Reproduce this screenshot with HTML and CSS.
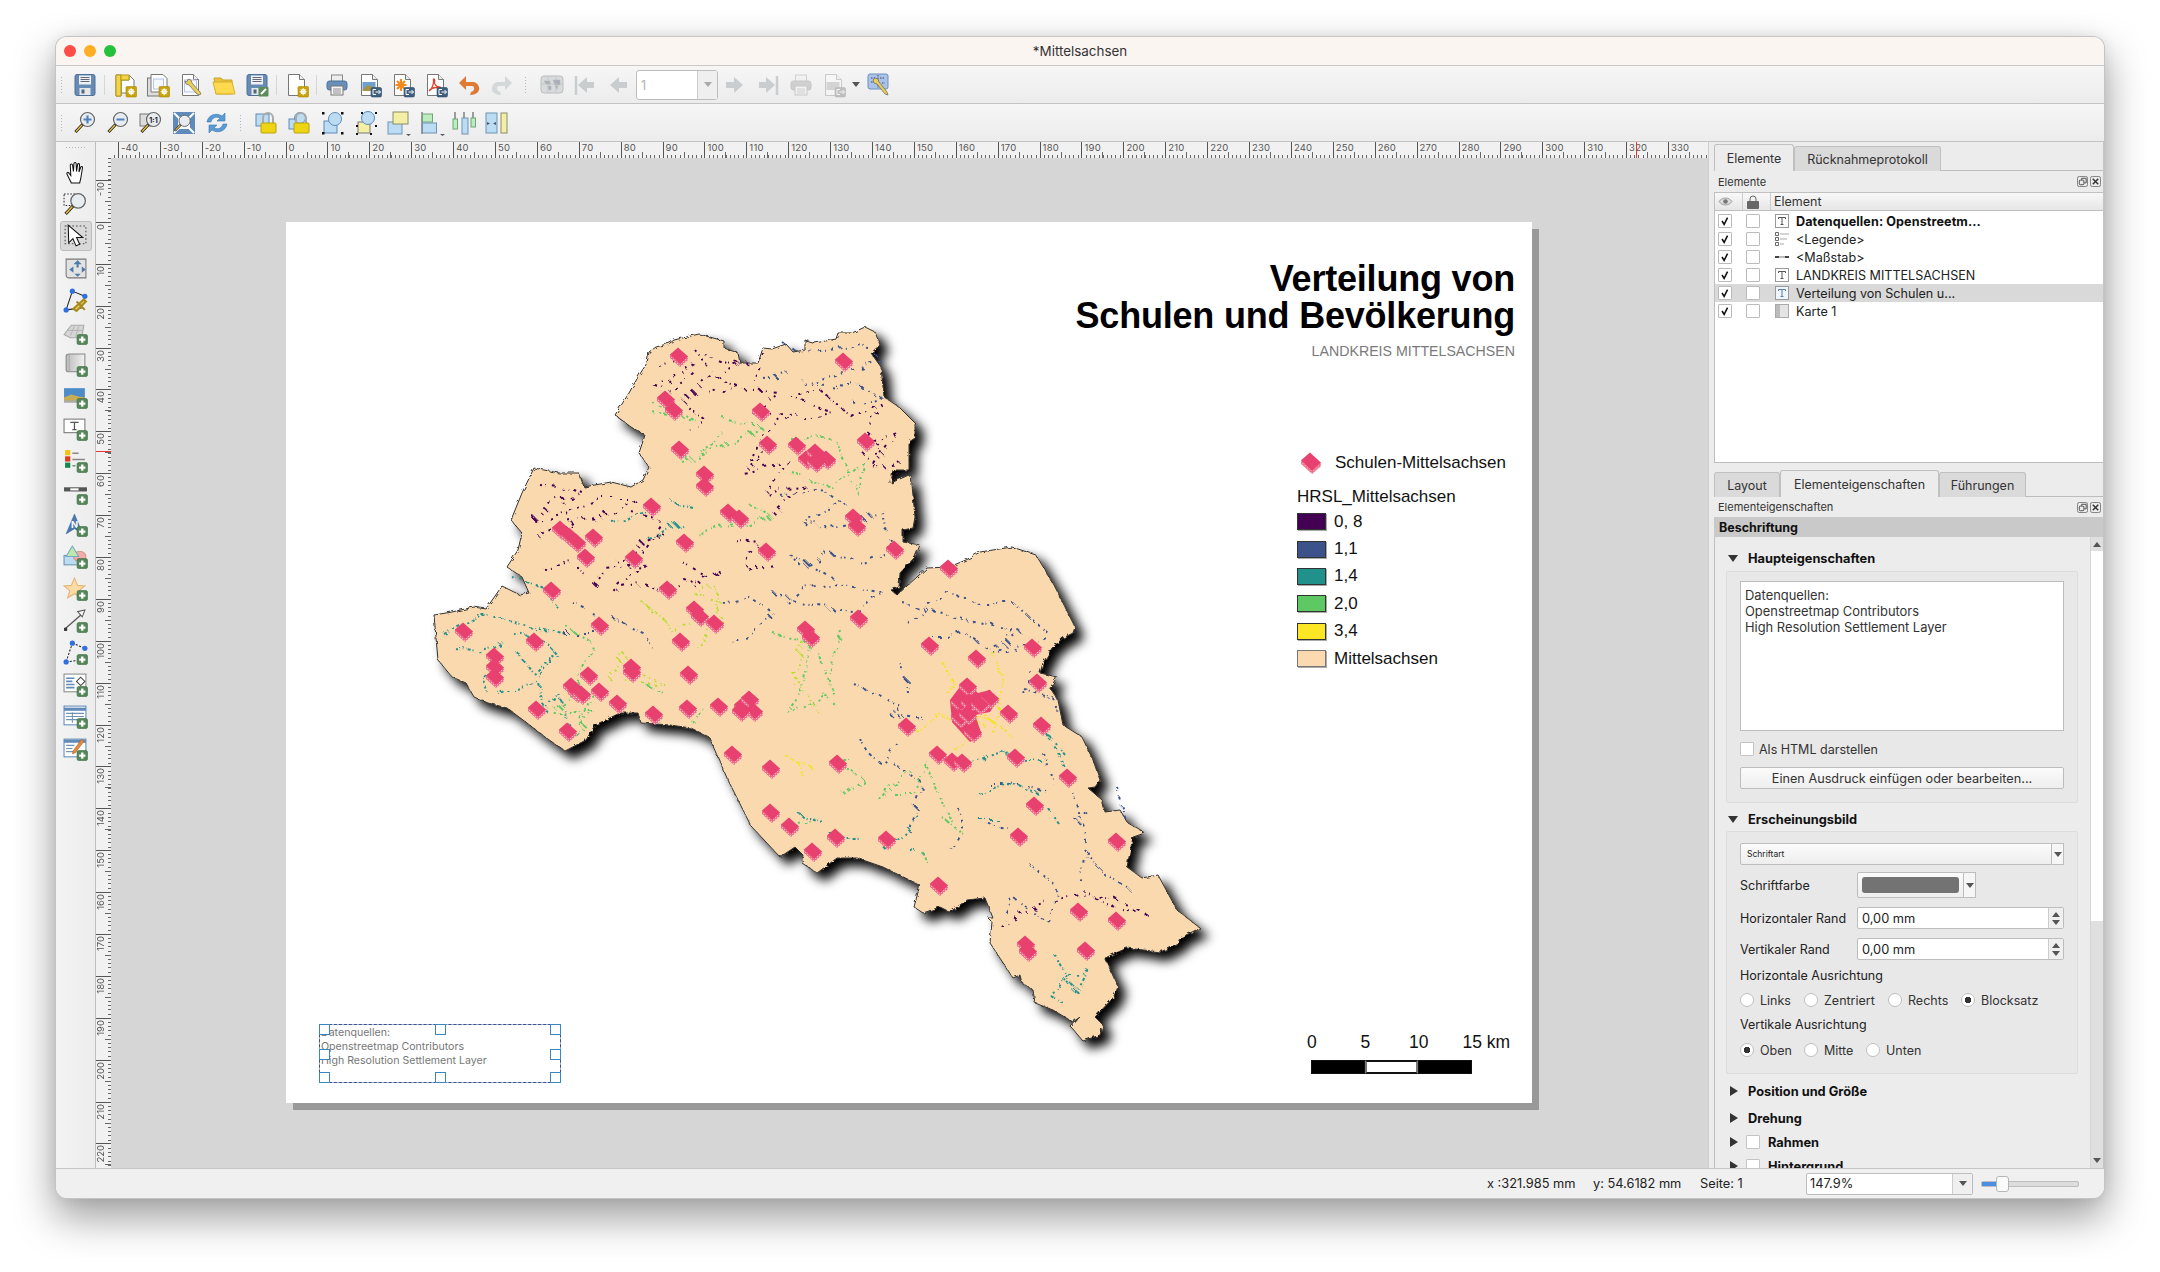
FILE: index.html
```html
<!DOCTYPE html>
<html lang="de">
<head>
<meta charset="utf-8">
<title>*Mittelsachsen</title>
<link rel="stylesheet" href="styles.css">
</head>
<body>
<svg class="defs" aria-hidden="true">
<defs>
<g id="plus"><rect x="13.5" y="14" width="10" height="9.5" rx="1.5" fill="#55875a" stroke="#3f6e45" stroke-width=".6"/><path d="M18.5 15.8v6M15.5 18.8h6" stroke="#fff" stroke-width="2.2"/></g>
<g id="gear"><rect x="13" y="13.5" width="10.5" height="10.5" rx="1" fill="#c8a208" stroke="#a88a06" stroke-width=".6"/><circle cx="18.2" cy="18.7" r="2" fill="none" stroke="#fff" stroke-width="1.2"/><path d="M18.2 15v7.4M14.6 18.7h7.2M15.7 16.2l5 5M20.7 16.2l-5 5" stroke="#fff" stroke-width=".8"/></g>
<g id="exp"><rect x="13" y="14.5" width="10.5" height="9.5" rx="1.5" fill="#3f5f7f" stroke="#2f4a66" stroke-width=".6"/><path d="M18 16.5h-3v5h3M17.5 19h5M20.5 17l2 2-2 2" fill="none" stroke="#fff" stroke-width="1"/></g>
<g id="page"><path d="M3.5 1.5h11l5 5v16h-16z" fill="#fff" stroke="#777"/><path d="M14.5 1.5v5h5" fill="#eee" stroke="#777"/></g>
<g id="floppy"><rect x="2" y="1.5" width="20" height="21" rx="2" fill="#668bb5" stroke="#4d7099"/><rect x="6" y="2.5" width="12" height="9" fill="#eef1f4"/><path d="M7.5 4.5h9M7.5 6.5h9M7.5 8.5h9" stroke="#667"/><rect x="6.5" y="15" width="11" height="7" fill="#e3e7ea"/><rect x="8.5" y="16.5" width="3" height="4" fill="#567"/></g>
<g id="printer"><rect x="6.5" y="2" width="11" height="7" fill="#eee" stroke="#888"/><rect x="2" y="8" width="20" height="9" rx="2.5" fill="#6a8fb8" stroke="#4d7099"/><rect x="6" y="13" width="12" height="9" fill="#f4f4f4" stroke="#777"/><path d="M8 16h8M8 18h8M8 20h8" stroke="#777" stroke-width=".8"/></g>
<g id="lens"><circle cx="14.5" cy="8.5" r="7" fill="#e6ecf0" stroke="#666" stroke-width="1.2"/><path d="M9.5 13.5L2.5 21" stroke="#222" stroke-width="3"/><path d="M9 14L3 20.5" stroke="#e8b93a" stroke-width="1.5"/></g>
<g id="lock"><path d="M8 12V7a5 5 0 0 1 10 0v5" fill="none" stroke="#aaa" stroke-width="2"/><rect x="6" y="12" width="15" height="10" rx="1" fill="#eed514" stroke="#b9a210"/></g>
<g id="arrowr"><path d="M3 9h8V4l9 8-9 8v-5H3z" fill="#c9cdcf"/></g>
<linearGradient id="gradMap"><stop offset="0" stop-color="#bbb"/><stop offset="1" stop-color="#f2f2f2"/></linearGradient>
<pattern id="hatch" width="2" height="2" patternUnits="userSpaceOnUse"><rect width="2" height="2" fill="#ee6d8c"/><path d="M0 0h1v1H0z" fill="#fbb6c2"/></pattern>
<g id="s"><path fill="url(#hatch)" d="M-9-2.500V1L1 10 9 3V-.5Z"/><path fill="#e8416f" d="M-9-2.500L-1-9.500 9-.5 1 7Z"/></g>
<filter id="terrain" x="-5%" y="-5%" width="115%" height="115%"><feTurbulence type="fractalNoise" baseFrequency=".22" numOctaves="2" seed="7" result="n"/><feDisplacementMap in="SourceGraphic" in2="n" scale="4" result="d"/><feGaussianBlur in="d" stdDeviation="5.5" result="b"/><feOffset in="b" dx="8" dy="8" result="o"/><feComponentTransfer in="o" result="sh"><feFuncR type="linear" slope="0"/><feFuncG type="linear" slope="0"/><feFuncB type="linear" slope="0"/></feComponentTransfer><feMerge><feMergeNode in="sh"/><feMergeNode in="d"/></feMerge></filter>
<filter id="wiggle" x="-5%" y="-5%" width="110%" height="110%"><feTurbulence type="fractalNoise" baseFrequency=".06" numOctaves="2" seed="11" result="n"/><feDisplacementMap in="SourceGraphic" in2="n" scale="14"/></filter>
</defs>
</svg>

<div class="window">
<header class="titlebar">
  <span class="light red"></span><span class="light amber"></span><span class="light green"></span>
  <span class="wintitle">*Mittelsachsen</span>
</header>

<div class="toolbar">
  <span class="grip"></span>
  <span class="tb"><svg class="ic" viewBox="0 0 24 24"><use href="#floppy"/></svg></span>
  <span class="sep"></span>
  <span class="tb"><svg class="ic" viewBox="0 0 24 24"><path d="M3 2h5v21H3zM8 7h8V2l5 5v13H8z" fill="#fff" stroke="#777"/><path d="M3 2h5v21H3z" fill="#f3d34a" stroke="#b79a10"/><path d="M8 2h8v5H8z" fill="#f3d34a" stroke="#b79a10"/><use href="#gear"/></svg></span>
  <span class="tb"><svg class="ic" viewBox="0 0 24 24"><rect x="1.5" y="5" width="17" height="18" fill="#ddd" stroke="#777"/><path d="M5 1.5h12l4 4V19H5z" fill="#fff" stroke="#777"/><rect x="7.5" y="6" width="10" height="10" fill="#f4f7ff" stroke="#b5c4ea"/><use href="#gear"/></svg></span>
  <span class="tb"><svg class="ic" viewBox="0 0 24 24"><use href="#page"/><rect x="5.5" y="7" width="12" height="12" fill="#f4f7ff" stroke="#b5c4ea"/><path d="M9 6l3 1 1 3 8 9 1 2-2 1-2-1-8-9-3-1-1-3 2 1z" fill="#e9cd56" stroke="#666" stroke-width=".7"/></svg></span>
  <span class="tb"><svg class="ic" viewBox="0 0 24 24"><path d="M2 5h7l2 2h9v14H4z" fill="#e9c23d" stroke="#c9a52a"/><path d="M4 21L1 9h19l3 12z" fill="#ffd94e" stroke="#d6b02f"/></svg></span>
  <span class="tb"><svg class="ic" viewBox="0 0 24 24"><use href="#floppy"/><rect x="13.5" y="14" width="10" height="9.5" rx="1" fill="#5b8c5a"/><path d="M16 21l5-5" stroke="#fff" stroke-width="2"/></svg></span>
  <span class="sep"></span>
  <span class="tb"><svg class="ic" viewBox="0 0 24 24"><use href="#page"/><use href="#gear"/></svg></span>
  <span class="sep"></span>
  <span class="tb"><svg class="ic" viewBox="0 0 24 24"><use href="#printer"/></svg></span>
  <span class="tb"><svg class="ic" viewBox="0 0 24 24"><use href="#page"/><rect x="4.5" y="9" width="13" height="8" fill="#6d9fd0"/><path d="M4.500 17l5-5 8 3v3h-13z" fill="#a89448"/><use href="#exp"/></svg></span>
  <span class="tb"><svg class="ic" viewBox="0 0 24 24"><use href="#page"/><path d="M10 6v12M4.500 12h11M6 8l8 8M14 8l-8 8" stroke="#f38a1d" stroke-width="2.2"/><use href="#exp"/></svg></span>
  <span class="tb"><svg class="ic" viewBox="0 0 24 24"><use href="#page"/><path d="M5 18c3-2 5-7 4.500-11-.2-2 2-1 1 2-.5 2 2 5 5 5 2 0 1 2-1 1-3-1-6-1-9.500 3" fill="none" stroke="#e2402a" stroke-width="1.3"/><use href="#exp"/></svg></span>
  <span class="tb"><svg class="ic" viewBox="0 0 24 24"><path d="M9 3L2 10l7 7v-4h6c3 0 3 5-1 6l-1 3c7 0 10-4 9-8-1-3-3-5-7-5H9z" fill="#de7a33"/></svg></span>
  <span class="tb"><svg class="ic" viewBox="0 0 24 24"><path d="M15 3l7 7-7 7v-4H9c-3 0-3 5 1 6l1 3c-7 0-10-4-9-8 1-3 3-5 7-5h6z" fill="#d5d8d8"/></svg></span>
  <span class="grip wide"></span>
  <span class="tb"><svg class="ic" viewBox="0 0 24 24"><rect x="1" y="3" width="22" height="17" rx="3" fill="#d8dbdc" stroke="#b9bcbd"/><path d="M4 8h6v3H6zM13 7h7v5h-5zM8 13h3v4H9zM15 13h3l-1 3zM8 4v15M16 4v15M2 11h20" fill="#aab" stroke="#b9bcbd" stroke-width=".6"/></svg></span>
  <span class="tb"><svg class="ic" viewBox="0 0 24 24"><path d="M3 3v19" stroke="#c9cdcf" stroke-width="2.5"/><path d="M21 9h-7V4l-9 8 9 8v-5h7z" fill="#c9cdcf"/></svg></span>
  <span class="tb"><svg class="ic" viewBox="0 0 24 24"><path d="M21 9h-8V4l-9 8 9 8v-5h8z" fill="#c9cdcf"/></svg></span>
  <span class="pagecombo"><span class="pageval">1</span><span class="pagearrow"><i class="tri grey"></i></span></span>
  <span class="tb"><svg class="ic" viewBox="0 0 24 24"><use href="#arrowr"/></svg></span>
  <span class="tb"><svg class="ic" viewBox="0 0 24 24"><path d="M21 3v19" stroke="#c9cdcf" stroke-width="2.5"/><path d="M3 9h7V4l9 8-9 8v-5H3z" fill="#c9cdcf"/></svg></span>
  <span class="tb"><svg class="ic dim" viewBox="0 0 24 24"><use href="#printer"/></svg></span>
  <span class="tb"><svg class="ic dim" viewBox="0 0 24 24"><use href="#page"/><rect x="4.5" y="9" width="13" height="8" fill="#6d9fd0"/><use href="#exp"/></svg></span>
  <span class="dropmark"><i class="tri"></i></span>
  <span class="tb"><svg class="ic" viewBox="0 0 24 24"><rect x="1" y="1" width="20" height="15" rx="2" fill="#a9c4e8" stroke="#6f8fbd"/><path d="M4 5h5M13 5h5M4 9h3M15 10h3M11 2v13" stroke="#446" stroke-width="1" stroke-dasharray="1.500 1"/><path d="M8 5l3 1 1 3 8 10 1 3-3-1-8-10-3-1-1-3z" fill="#e9cd56" stroke="#666" stroke-width=".7"/></svg></span>
</div>

<div class="toolbar second">
  <span class="grip"></span>
  <span class="tb"><svg class="ic" viewBox="0 0 24 24"><use href="#lens"/><path d="M14.500 4.500v8M10.500 8.500h8" stroke="#4f82bd" stroke-width="2.2"/></svg></span>
  <span class="tb"><svg class="ic" viewBox="0 0 24 24"><use href="#lens"/><path d="M10.500 8.500h8" stroke="#4f82bd" stroke-width="2.2"/></svg></span>
  <span class="tb"><svg class="ic" viewBox="0 0 24 24"><rect x="1" y="3" width="13" height="12" fill="#dcdcdc" stroke="#777"/><use href="#lens"/><text class="one" x="14.5" y="11.5">1:1</text></svg></span>
  <span class="tb"><svg class="ic" viewBox="0 0 24 24"><rect x="1" y="1" width="22" height="22" fill="#5f8ab9"/><rect x="6" y="6" width="12" height="12" fill="#f2f4f6"/><path d="M2 2l7 7M22 2l-7 7M2 22l7-7M22 22l-7-7" stroke="#fff" stroke-width="2"/><use href="#lens" transform="translate(1 3) scale(.8)"/></svg></span>
  <span class="tb"><svg class="ic" viewBox="0 0 24 24"><path d="M2 11C3 4 11 1 17 5l3-3v8h-8l3-3C11 5 7 7 6 11z" fill="#5a9bd5" stroke="#3e78b0" stroke-width=".6"/><path d="M22 13c-1 7-9 10-15 6l-3 3v-8h8l-3 3c4 2 8 0 9-4z" fill="#5a9bd5" stroke="#3e78b0" stroke-width=".6"/></svg></span>
  <span class="grip wide"></span>
  <span class="tb"><svg class="ic" viewBox="0 0 24 24"><rect x="1" y="3" width="13" height="12" fill="#bcdcf4" stroke="#5f8ab9"/><use href="#lock"/></svg></span>
  <span class="tb"><svg class="ic" viewBox="0 0 24 24"><rect x="1" y="8" width="11" height="10" fill="#bcdcf4" stroke="#5f8ab9"/><circle cx="12" cy="7" r="5.5" fill="#bcdcf4" stroke="#5f8ab9"/><use href="#lock"/></svg></span>
  <span class="tb"><svg class="ic" viewBox="0 0 24 24"><rect x="3" y="10" width="13" height="12" fill="#bcdcf4" stroke="#5f8ab9"/><circle cx="14" cy="8" r="6.5" fill="#bcdcf4" stroke="#5f8ab9"/><path d="M1 1h2.500v2.500H1zM20 1h2.500v2.500H20zM1 21h2.500v2.500H1zM20 21h2.500v2.500H20z" fill="#111"/></svg></span>
  <span class="tb"><svg class="ic" viewBox="0 0 24 24"><rect x="4" y="11" width="12" height="11" fill="#f3efa4" stroke="#777"/><circle cx="14" cy="7" r="6.5" fill="#bcdcf4" stroke="#5f8ab9"/><path d="M7 1h2v2H7zM21 1h2v2h-2zM2 14h2v2H2zM2 22h2v2H2zM21 14h2v2h-2zM16 22h2v2h-2z" fill="#111"/></svg></span>
  <span class="tb"><svg class="ic" viewBox="0 0 24 24"><rect x="1" y="11" width="14" height="12" fill="#bcdcf4" stroke="#6f93b5"/><rect x="6" y="1" width="15" height="12" fill="#f3efa4" stroke="#8a8a70"/><path d="M19 23h5l-2.500 2z" fill="#555"/></svg></span>
  <span class="tb"><svg class="ic" viewBox="0 0 24 24"><path d="M2 1v22" stroke="#444"/><rect x="2.5" y="3" width="10" height="8" fill="#bcecc0" stroke="#6fa574"/><rect x="2.5" y="12" width="14" height="10" fill="#bcdcf4" stroke="#6f93b5"/><path d="M20 23h5l-2.500 2z" fill="#555"/></svg></span>
  <span class="tb"><svg class="ic" viewBox="0 0 24 24"><path d="M2 1v8M11 1v6M20 1v8" stroke="#444"/><rect x="0" y="8" width="4.5" height="10" fill="#bcecc0" stroke="#6fa574"/><rect x="9" y="7" width="6" height="16" fill="#bcdcf4" stroke="#6f93b5"/><rect x="18" y="7" width="4.5" height="9" fill="#bcecc0" stroke="#6fa574"/></svg></span>
  <span class="tb"><svg class="ic" viewBox="0 0 24 24"><rect x="0" y="2" width="11" height="20" fill="#bcdcf4" stroke="#6f93b5"/><rect x="15" y="2" width="6" height="20" fill="#f3efa4" stroke="#8a8a70"/><path d="M1 11l3 1.500-3 1.500zM10 11l-3 1.500 3 1.500z" fill="#456"/></svg></span>
</div>

<div class="workspace">
  <nav class="sidetools">
    <span class="grip flat"></span>
    <span class="st"><svg class="ic" viewBox="0 0 24 24"><path d="M8 22L4 14c-1-2 1-3 2-1l1.500 2L7 5c0-1.500 2-1.500 2.200 0L10 11l.5-7.500c.2-1.500 2-1.500 2.100 0L13 11l1-6.500c.3-1.500 2-1.300 1.900.3l-.6 6.700L17 7c.5-1.200 2-.8 1.700.7L17 18l-1 4z" fill="#fff" stroke="#111"/></svg></span>
    <span class="st"><svg class="ic" viewBox="0 0 24 24"><rect x="1" y="2" width="11" height="11" fill="none" stroke="#333" stroke-dasharray="1.500 1.500"/><use href="#lens"/></svg></span>
    <span class="st on"><svg class="ic" viewBox="0 0 24 24"><rect x="2" y="2" width="20" height="17" fill="none" stroke="#444" stroke-dasharray="1.500 2"/><path d="M5 1l.5 17 4-4 3 7 3.500-1.500-3-6.500h6z" fill="#fff" stroke="#111"/></svg></span>
    <span class="st"><svg class="ic" viewBox="0 0 24 24"><path d="M3 3h19v18H6c-3 0-3-2-3-3z" fill="#e2e2e2" stroke="#777"/><path d="M14 4l4 4h-3v3h-2V8h-3zM14 20l-3-3h6zM6 13l4-3v6zM22 13l-4-3v6z" fill="#4d7ba8"/></svg></span>
    <span class="st"><svg class="ic" viewBox="0 0 24 24"><path d="M9 3l12 5M3 21L9 3M3 21l16-2" stroke="#222" fill="none"/><circle cx="9" cy="3" r="2.5" fill="#2f6fe0"/><circle cx="21" cy="8" r="2.5" fill="#2f6fe0"/><circle cx="3" cy="21" r="2.5" fill="#2f6fe0"/><path d="M10 20l10-9 2 2-9 9zM13 13l8 8" stroke="#a88a20" stroke-width="2" fill="#e9cd56"/></svg></span>
    <span class="st"><svg class="ic" viewBox="0 0 24 24"><path d="M1 14L8 5h12l-2 12H7z" fill="#d6d6d6" stroke="#aaa"/><path d="M4 10h15M7 15l4-9M12 16l3-10" stroke="#aaa" stroke-width=".7"/><use href="#plus"/></svg></span>
    <span class="st"><svg class="ic" viewBox="0 0 24 24"><path d="M6 2h15v17H6c-3 0-3-1-3-2V4c0-1 1-2 3-2z" fill="url(#gradMap)" stroke="#888"/><path d="M6 2v17" stroke="#aaa"/><use href="#plus"/></svg></span>
    <span class="st"><svg class="ic" viewBox="0 0 24 24"><rect x="1" y="4" width="20" height="12" fill="#4d8cc9"/><path d="M1 16v-3l7-3 7 2 6 1v3z" fill="#c9ad55"/><path d="M1 16h20v2H1z" fill="#aaa"/><use href="#plus"/></svg></span>
    <span class="st"><svg class="ic" viewBox="0 0 24 24"><rect x="1" y="3" width="20" height="13" fill="#fff" stroke="#777"/><path d="M7 6h8M11 6v7M9 13h4" stroke="#555" stroke-width="1.2" fill="none"/><use href="#plus"/></svg></span>
    <span class="st"><svg class="ic" viewBox="0 0 24 24"><rect x="2" y="2" width="5" height="5" fill="#f3c20e"/><rect x="2" y="8" width="5" height="5" fill="#e03a1c"/><rect x="2" y="14" width="5" height="5" fill="#0f8a4a"/><path d="M9 5h6M9 11h12M9 17h3" stroke="#888" stroke-width="1.6"/><use href="#plus"/></svg></span>
    <span class="st"><svg class="ic" viewBox="0 0 24 24"><rect x="1" y="7" width="22" height="4" fill="#555"/><rect x="7" y="8" width="8" height="2" fill="#fff"/><use href="#plus"/></svg></span>
    <span class="st"><svg class="ic" viewBox="0 0 24 24"><path d="M11 2L3 21l8-5 8 5z" fill="#4c79ad" stroke="#37608f" stroke-width=".5"/><text class="north" x="11" y="15">N</text><use href="#plus"/></svg></span>
    <span class="st"><svg class="ic" viewBox="0 0 24 24"><rect x="1" y="11" width="16" height="9" fill="#bcdcf4" stroke="#6f93b5"/><ellipse cx="16" cy="12" rx="6" ry="5" fill="#f2aaaa" stroke="#c98"/><path d="M9 2l6 10H3z" fill="#bfe8b0" stroke="#7ab"/><use href="#plus"/></svg></span>
    <span class="st"><svg class="ic" viewBox="0 0 24 24"><path d="M11 2l3 7 7 .5-5.500 4.500 2 7L11 17l-6.500 4 2-7L1 9.500 8 9z" fill="#fddba6" stroke="#e3b36f"/><use href="#plus"/></svg></span>
    <span class="st"><svg class="ic" viewBox="0 0 24 24"><path d="M2 20L18 6" stroke="#555" stroke-width="1.2"/><path d="M21 2l-7 1.500 4.500 5z" fill="#fff" stroke="#555"/><rect x="1" y="19" width="3" height="3" fill="#333"/><use href="#plus"/></svg></span>
    <span class="st"><svg class="ic" viewBox="0 0 24 24"><path d="M9 3l12 5M3 21L9 3M3 21l16-2" stroke="#222" fill="none" stroke-dasharray="2 1.500"/><circle cx="9" cy="3" r="2.5" fill="#2f6fe0"/><circle cx="21" cy="8" r="2.5" fill="#2f6fe0"/><circle cx="3" cy="21" r="2.5" fill="#2f6fe0"/><use href="#plus"/></svg></span>
    <span class="st"><svg class="ic" viewBox="0 0 24 24"><rect x="1" y="2" width="21" height="17" fill="#fff" stroke="#888"/><path d="M3 6h8M3 9h6M3 12h8M3 15h8" stroke="#5f8ab9" stroke-width="1.5"/><path d="M13 9l4-4 4 4-4 4z" fill="none" stroke="#444"/><use href="#plus"/></svg></span>
    <span class="st"><svg class="ic" viewBox="0 0 24 24"><rect x="1" y="2" width="21" height="18" fill="#fff" stroke="#5f8ab9"/><path d="M1 5h21" stroke="#5f8ab9" stroke-width="3"/><path d="M3 9h17M3 12h17M3 15h17M9 8v10" stroke="#6f93b5"/><use href="#plus"/></svg></span>
    <span class="st"><svg class="ic" viewBox="0 0 24 24"><rect x="1" y="3" width="21" height="17" fill="#fff" stroke="#5f8ab9"/><path d="M1 5h21" stroke="#5f8ab9" stroke-width="3"/><path d="M3 9h8M3 12h6M3 15h7" stroke="#6f93b5"/><path d="M10 14l8-11 2 2-8 11-3 1z" fill="#e9893a" stroke="#a5602a" stroke-width=".6"/><use href="#plus"/></svg></span>
  </nav>

  <div class="center">
    <div class="hruler">
      <span class="rcorner"></span>
      <span class="hlead"></span>
      <span class="ht">-40</span><span class="ht">-30</span><span class="ht">-20</span><span class="ht">-10</span><span class="ht">0</span><span class="ht">10</span><span class="ht">20</span><span class="ht">30</span><span class="ht">40</span><span class="ht">50</span><span class="ht">60</span><span class="ht">70</span><span class="ht">80</span><span class="ht">90</span><span class="ht">100</span><span class="ht">110</span><span class="ht">120</span><span class="ht">130</span><span class="ht">140</span><span class="ht">150</span><span class="ht">160</span><span class="ht">170</span><span class="ht">180</span><span class="ht">190</span><span class="ht">200</span><span class="ht">210</span><span class="ht">220</span><span class="ht">230</span><span class="ht">240</span><span class="ht">250</span><span class="ht">260</span><span class="ht">270</span><span class="ht">280</span><span class="ht">290</span><span class="ht">300</span><span class="ht">310</span><span class="ht">320</span><span class="ht">330</span>
      <i class="cursor-x"></i>
    </div>
    <div class="centerrow">
      <div class="vruler">
        <span class="vlead"></span>
        <span class="vt"><b>-10</b></span><span class="vt"><b>0</b></span><span class="vt"><b>10</b></span><span class="vt"><b>20</b></span><span class="vt"><b>30</b></span><span class="vt"><b>40</b></span><span class="vt"><b>50</b></span><span class="vt"><b>60</b></span><span class="vt"><b>70</b></span><span class="vt"><b>80</b></span><span class="vt"><b>90</b></span><span class="vt"><b>100</b></span><span class="vt"><b>110</b></span><span class="vt"><b>120</b></span><span class="vt"><b>130</b></span><span class="vt"><b>140</b></span><span class="vt"><b>150</b></span><span class="vt"><b>160</b></span><span class="vt"><b>170</b></span><span class="vt"><b>180</b></span><span class="vt"><b>190</b></span><span class="vt"><b>200</b></span><span class="vt"><b>210</b></span><span class="vt"><b>220</b></span>
        <i class="cursor-y"></i>
      </div>
      <main class="canvas">
        <section class="sheet">
          <svg class="map" viewBox="286 222 1246 881" aria-label="Karte Mittelsachsen">
            <polygon class="land" filter="url(#terrain)" points="649,352 656,347 670,343 674,340 699,334 724,341 724,348 738,353 740,363 758,363 763,348 772,349 786,344 793,352 805,350 805,340 815,343 836,339 838,333 852,333 865,327 875,332 880,345 871,353 881,367 884,397 899,407 915,423 915,438 909,442 909,470 893,470 891,483 911,474 915,517 913,528 903,530 903,542 920,545 915,557 900,573 899,587 891,590 897,595 927,568 949,567 966,560 980,552 1012,547 1036,555 1054,585 1075,627 1073,633 1063,638 1052,648 1043,663 1040,673 1057,677 1050,688 1058,700 1063,725 1082,737 1093,760 1100,780 1095,787 1088,788 1102,800 1105,812 1120,810 1128,823 1145,833 1133,837 1127,867 1142,878 1158,875 1177,910 1200,928 1180,938 1177,945 1160,952 1127,948 1105,958 1118,987 1113,998 1095,1017 1103,1025 1100,1035 1083,1041 1071,1027 1080,1017 1073,1022 1053,1010 1035,1003 1033,990 1022,983 1020,975 1013,978 990,943 992,922 988,918 993,918 985,898 967,900 950,912 940,907 923,913 914,907 920,885 895,873 883,867 857,858 837,858 817,873 802,863 803,855 795,847 780,857 751,826 727,778 709,737 691,728 670,725 641,723 638,713 620,713 595,725 586,740 565,751 545,737 527,723 507,708 488,703 474,697 466,683 452,677 438,660 434,615 452,612 474,607 486,609 502,586 520,595 529,593 522,577 507,567 518,550 522,533 511,520 522,493 534,468 559,473 579,473 584,487 611,482 631,487 643,480 649,467 639,453 645,435 631,427 615,415 629,393 638,377 647,363"/>
            <g filter="url(#wiggle)" transform="translate(-7 -7)">
            <g class="r8">
              <path d="M665 372L682 365 700 372 674 386 662 392 680 398 700 378M710 360L740 372 755 368 725 385 748 395 715 400"/>
              <path d="M745 395L785 400 760 425 800 418 770 440 755 470 780 455 750 480 795 470 770 500 810 495 780 520"/>
              <path d="M810 425L840 420 800 405 825 395 860 425 890 410 870 450 905 440 880 475 910 470 895 495"/>
              <path d="M545 490L575 495 590 500 555 510 540 530 570 520 610 505 640 505 610 525 580 530 545 545"/>
              <path d="M550 575L580 570 600 590 610 575 650 572 620 598 650 590 670 600 690 585 705 590"/>
              <path d="M690 570L715 585 725 575 700 595M670 540L650 550 635 580"/>
              <path d="M870 460L880 470 890 455 875 445M740 545L765 550 750 575 780 570"/>
              <path d="M1010 935L1030 920 1070 905 1100 900 1135 912 1155 922 1120 915 1085 895"/>
              <path d="M700 355L720 380 690 410 715 430 700 440M770 360L760 390M640 520L670 530 650 560 620 570M570 505L585 560"/>
            </g>
            <g class="r11">
              <path d="M790 350L810 362 840 355 870 352 890 368 850 380 810 390 870 395 888 405 860 410M770 385L800 380"/>
              <path d="M790 505L825 495 850 510 810 530 845 535 890 520 900 555 870 570 830 560 810 575 795 560 840 585"/>
              <path d="M910 610L965 625 1000 632 1030 640 1000 660 1040 650 1055 640 1020 610 985 610 955 600 915 630"/>
              <path d="M795 610L810 595 840 590 890 600 865 620 810 610 780 600"/>
              <path d="M620 625L650 640 660 655M580 610L600 620M570 640L610 640M730 610L755 603 780 620 755 640 740 650"/>
              <path d="M860 690L910 715 895 720 930 725M866 745L875 760 890 772 905 750M915 700L913 680 910 670"/>
              <path d="M935 645L955 645 970 640 995 655 1010 650M1015 650L1020 630M1030 700L1040 680"/>
              <path d="M1080 800L1095 850 1090 890M1030 695L1060 705 1065 720M1125 795L1135 830"/>
              <path d="M965 815L970 835 960 860M995 830L1015 835M1090 855L1110 880 1135 895M1085 830L1095 815"/>
              <path d="M1035 870L1060 890 1065 900 1055 930 1020 905 1010 925"/>
              <path d="M995 790L1010 790 1040 795 1055 800M1050 760L1060 790M900 770L930 790 915 840"/>
            </g>
            <g class="r14">
              <path d="M450 640L480 625 510 625 530 632 570 640M520 585L550 595 565 615M520 640L555 650 565 665"/>
              <path d="M462 655L485 660 510 650M525 660L540 680 560 660 540 690 505 700M490 680L495 700"/>
              <path d="M545 690L555 720 565 700 580 745M655 545L690 530M700 515L680 510M620 530L660 520"/>
              <path d="M1010 760L1025 768 1050 770M1070 760L1055 740 1072 775M975 770L1000 762 1020 760"/>
              <path d="M985 800L1010 790 1030 795 1045 800M1055 815L1065 830M985 825L1010 825M890 855L915 835 925 820"/>
              <path d="M832 835L845 845 865 845M805 820L830 830M1060 960L1070 975 1085 1000 1070 985"/>
              <path d="M1055 1000L1070 1010M920 860L935 862M1082 1000L1095 975 1055 1000"/>
            </g>
            <g class="r20">
              <path d="M660 410L690 420 700 425 660 420M730 425L770 435 710 460 730 440M755 510L780 525 700 540"/>
              <path d="M800 480L825 490 840 495 870 470 865 500 840 445 795 445M690 470L720 460"/>
              <path d="M575 635L600 650 580 700 560 720 600 720 585 745 600 700M710 715L700 730M650 690L670 700"/>
              <path d="M780 640L815 650 810 700 795 720 840 700 825 660M850 640L835 690M830 700L845 715"/>
              <path d="M850 800L870 785 840 770 860 765M935 775L945 800 960 830M890 810L905 785 920 775"/>
              <path d="M895 800L920 800 935 770M950 825L975 845M805 830L820 825M930 860L935 870"/>
            </g>
            <g class="r28">
              <path d="M660 620L650 610 670 625 680 640 700 625 730 635 720 590 700 600 730 610 710 650 700 655"/>
              <path d="M615 685L630 660 645 680 670 690 630 690M810 650L800 690M800 680L825 720"/>
            </g>
            <g class="r34">
              <path d="M950 670L960 690 955 700M925 740L945 720 970 735M1000 660L1010 690 1005 720 1000 740"/>
              <path d="M1000 730L1010 735 1020 745M965 760L975 745 985 730 970 720M805 770L810 785M795 765L820 775"/>
              <path d="M985 725L1000 730 990 720 975 725 995 735"/>
            </g>
            </g>
            <polygon class="tint" points="950,700 965,680 978,693 990,690 998,700 990,712 975,715 982,735 970,742 952,722"/>
            <g class="schools">
              <use href="#s" x="679" y="357"/><use href="#s" x="844" y="362"/><use href="#s" x="666" y="400"/><use href="#s" x="674" y="411"/><use href="#s" x="761" y="412"/><use href="#s" x="680" y="450"/><use href="#s" x="768" y="445"/><use href="#s" x="797" y="446"/><use href="#s" x="807" y="460"/><use href="#s" x="816" y="453"/><use href="#s" x="827" y="460"/><use href="#s" x="816" y="463"/><use href="#s" x="866" y="442"/><use href="#s" x="705" y="475"/><use href="#s" x="705" y="487"/><use href="#s" x="652" y="507"/><use href="#s" x="729" y="513"/><use href="#s" x="740" y="519"/><use href="#s" x="854" y="518"/><use href="#s" x="857" y="527"/><use href="#s" x="895" y="550"/><use href="#s" x="685" y="543"/><use href="#s" x="767" y="552"/><use href="#s" x="561" y="530"/><use href="#s" x="570" y="537"/><use href="#s" x="577" y="543"/><use href="#s" x="594" y="538"/><use href="#s" x="586" y="558"/><use href="#s" x="634" y="559"/><use href="#s" x="949" y="569"/><use href="#s" x="552" y="591"/><use href="#s" x="668" y="590"/><use href="#s" x="695" y="610"/><use href="#s" x="700" y="617"/><use href="#s" x="715" y="624"/><use href="#s" x="859" y="619"/><use href="#s" x="464" y="632"/><use href="#s" x="535" y="642"/><use href="#s" x="600" y="626"/><use href="#s" x="806" y="630"/><use href="#s" x="811" y="638"/><use href="#s" x="681" y="642"/><use href="#s" x="930" y="646"/><use href="#s" x="495" y="657"/><use href="#s" x="495" y="668"/><use href="#s" x="495" y="678"/><use href="#s" x="632" y="668"/><use href="#s" x="632" y="673"/><use href="#s" x="589" y="676"/><use href="#s" x="689" y="675"/><use href="#s" x="572" y="687"/><use href="#s" x="577" y="693"/><use href="#s" x="582" y="695"/><use href="#s" x="600" y="692"/><use href="#s" x="618" y="704"/><use href="#s" x="537" y="710"/><use href="#s" x="654" y="715"/><use href="#s" x="688" y="709"/><use href="#s" x="719" y="707"/><use href="#s" x="743" y="707"/><use href="#s" x="750" y="700"/><use href="#s" x="754" y="712"/><use href="#s" x="741" y="712"/><use href="#s" x="907" y="727"/><use href="#s" x="568" y="732"/>
              <use href="#s" x="977" y="659"/><use href="#s" x="1033" y="648"/><use href="#s" x="1038" y="683"/><use href="#s" x="968" y="687"/><use href="#s" x="990" y="699"/><use href="#s" x="960" y="703"/><use href="#s" x="970" y="703"/><use href="#s" x="980" y="705"/><use href="#s" x="960" y="718"/><use href="#s" x="968" y="715"/><use href="#s" x="973" y="733"/><use href="#s" x="1009" y="714"/><use href="#s" x="1042" y="726"/><use href="#s" x="938" y="755"/><use href="#s" x="953" y="762"/><use href="#s" x="963" y="763"/><use href="#s" x="1016" y="758"/><use href="#s" x="1068" y="778"/><use href="#s" x="838" y="764"/><use href="#s" x="1035" y="806"/><use href="#s" x="790" y="827"/><use href="#s" x="813" y="852"/><use href="#s" x="836" y="838"/><use href="#s" x="887" y="840"/><use href="#s" x="1019" y="837"/><use href="#s" x="1117" y="842"/><use href="#s" x="939" y="886"/><use href="#s" x="1079" y="912"/><use href="#s" x="1117" y="921"/><use href="#s" x="1026" y="945"/><use href="#s" x="1028" y="952"/><use href="#s" x="1086" y="951"/><use href="#s" x="771" y="769"/><use href="#s" x="733" y="755"/><use href="#s" x="771" y="813"/>
            </g>
          </svg>

          <h1 class="maptitle">Verteilung von<br>Schulen und Bevölkerung</h1>
          <p class="mapsub">LANDKREIS MITTELSACHSEN</p>

          <div class="legend">
            <div class="lg-school"><svg class="lg-sym" viewBox="-10 -10 20 20"><use href="#s"/></svg><span>Schulen-Mittelsachsen</span></div>
            <div class="lg-head">HRSL_Mittelsachsen</div>
            <div class="lg-row"><i class="patch p1"></i>0, 8</div>
            <div class="lg-row"><i class="patch p2"></i>1,1</div>
            <div class="lg-row"><i class="patch p3"></i>1,4</div>
            <div class="lg-row"><i class="patch p4"></i>2,0</div>
            <div class="lg-row"><i class="patch p5"></i>3,4</div>
            <div class="lg-row"><i class="patch p6"></i>Mittelsachsen</div>
          </div>

          <div class="scalebar">
            <div class="sb-labels"><span>0</span><span>5</span><span>10</span><span class="sb-last">15 km</span></div>
            <div class="sb-bar"><i></i><i class="w"></i><i></i></div>
          </div>

          <div class="sources">
            <p>Datenquellen:<br>Openstreetmap Contributors<br>High Resolution Settlement Layer</p>
            <i class="h tl"></i><i class="h tm"></i><i class="h tr"></i><i class="h ml"></i><i class="h mr"></i><i class="h bl"></i><i class="h bm"></i><i class="h br"></i>
          </div>
        </section>
      </main>
    </div>
  </div>
  <div class="splitter"></div>

  <aside class="dock">
    <div class="tabs"><span class="tab on">Elemente</span><span class="tab t2">Rücknahmeprotokoll</span></div>
    <div class="docktitle"><span>Elemente</span><span class="dockbtns"><svg class="dbtn" viewBox="0 0 12 12"><rect x=".5" y=".5" width="11" height="11" rx="2" fill="none" stroke="#777"/><rect x="2.5" y="4.5" width="5" height="5" rx="1" fill="none" stroke="#444"/><path d="M5 4V2.500h5v5H8" fill="none" stroke="#444"/></svg><svg class="dbtn" viewBox="0 0 12 12"><rect x=".5" y=".5" width="11" height="11" rx="2" fill="none" stroke="#777"/><path d="M3 3l6 6M9 3l-6 6" stroke="#333" stroke-width="1.6"/></svg></span></div>
    <div class="treehead">
      <span class="th-a"><svg class="eye" viewBox="0 0 16 12"><path d="M1 6c3-5 11-5 14 0-3 5-11 5-14 0z" fill="#ddd" stroke="#999"/><circle cx="8" cy="6" r="2.5" fill="#777"/></svg></span>
      <span class="th-b"><svg class="padlock" viewBox="0 0 12 14"><path d="M3 6V4a3 3 0 0 1 6 0v2" fill="none" stroke="#666"/><rect x="0" y="6" width="12" height="8" rx="1" fill="#666"/></svg></span>
      <span class="th-c">Element</span>
    </div>
    <div class="tree">
      <div class="row"><span class="cb"><svg viewBox="0 0 14 14"><path d="M3.500 7l2.500 4 4-8" fill="none" stroke="#111" stroke-width="1.8"/></svg></span><span class="cb lockbox"></span><svg class="ri" viewBox="0 0 14 14"><rect x=".5" y=".5" width="13" height="13" fill="#fff" stroke="#999"/><path d="M3.500 3.500h7v1.500M7 3.500v7M5.500 10.500h3M3.500 3.500V5" fill="none" stroke="#555"/></svg><b>Datenquellen: Openstreetm...</b></div>
      <div class="row"><span class="cb"><svg viewBox="0 0 14 14"><path d="M3.500 7l2.500 4 4-8" fill="none" stroke="#111" stroke-width="1.8"/></svg></span><span class="cb lockbox"></span><svg class="ri" viewBox="0 0 14 14"><path d="M.5.500h3v3h-3zM.5 5.500h3v3h-3zM.5 10.500h3v3h-3z" fill="#fff" stroke="#666"/><path d="M5 2h9M5 7h7M5 12h4" stroke="#aaa"/></svg><span>&lt;Legende&gt;</span></div>
      <div class="row"><span class="cb"><svg viewBox="0 0 14 14"><path d="M3.500 7l2.500 4 4-8" fill="none" stroke="#111" stroke-width="1.8"/></svg></span><span class="cb lockbox"></span><svg class="ri" viewBox="0 0 14 14"><path d="M0 6h4v2H0zM10 6h4v2h-4z" fill="#444"/><path d="M4 6h6v2H4z" fill="#bbb"/></svg><span>&lt;Maßstab&gt;</span></div>
      <div class="row"><span class="cb"><svg viewBox="0 0 14 14"><path d="M3.500 7l2.500 4 4-8" fill="none" stroke="#111" stroke-width="1.8"/></svg></span><span class="cb lockbox"></span><svg class="ri" viewBox="0 0 14 14"><rect x=".5" y=".5" width="13" height="13" fill="#fff" stroke="#999"/><path d="M3.500 3.500h7v1.500M7 3.500v7M5.500 10.500h3M3.500 3.500V5" fill="none" stroke="#555"/></svg><span>LANDKREIS MITTELSACHSEN</span></div>
      <div class="row sel"><span class="cb"><svg viewBox="0 0 14 14"><path d="M3.500 7l2.500 4 4-8" fill="none" stroke="#111" stroke-width="1.8"/></svg></span><span class="cb lockbox"></span><svg class="ri" viewBox="0 0 14 14"><rect x=".5" y=".5" width="13" height="13" fill="#eef5fc" stroke="#999"/><path d="M3.500 3.500h7v1.500M7 3.500v7M5.500 10.500h3M3.500 3.500V5" fill="none" stroke="#5a7fa5"/></svg><span>Verteilung von Schulen u...</span></div>
      <div class="row"><span class="cb"><svg viewBox="0 0 14 14"><path d="M3.500 7l2.500 4 4-8" fill="none" stroke="#111" stroke-width="1.8"/></svg></span><span class="cb lockbox"></span><svg class="ri" viewBox="0 0 14 14"><rect x=".5" y=".5" width="13" height="13" fill="#e4e4e4" stroke="#aaa"/><rect x="1" y="1" width="4" height="12" fill="#bbb"/></svg><span>Karte 1</span></div>
    </div>
    <div class="dockgap"></div>
    <div class="tabs lower"><span class="tab t3">Layout</span><span class="tab on t4">Elementeigenschaften</span><span class="tab t5">Führungen</span></div>
    <div class="docktitle second"><span>Elementeigenschaften</span><span class="dockbtns"><svg class="dbtn" viewBox="0 0 12 12"><rect x=".5" y=".5" width="11" height="11" rx="2" fill="none" stroke="#777"/><rect x="2.5" y="4.5" width="5" height="5" rx="1" fill="none" stroke="#444"/><path d="M5 4V2.500h5v5H8" fill="none" stroke="#444"/></svg><svg class="dbtn" viewBox="0 0 12 12"><rect x=".5" y=".5" width="11" height="11" rx="2" fill="none" stroke="#777"/><path d="M3 3l6 6M9 3l-6 6" stroke="#333" stroke-width="1.6"/></svg></span></div>
    <div class="ptitle">Beschriftung</div>
    <div class="scrollwrap">
      <div class="props">
        <div class="sec first"><i class="tri down big"></i><b>Haupteigenschaften</b></div>
        <div class="group g1">
          <div class="textarea">Datenquellen:<br>Openstreetmap Contributors<br>High Resolution Settlement Layer</div>
          <label class="check"><i class="box"></i>Als HTML darstellen</label>
          <div class="button">Einen Ausdruck einfügen oder bearbeiten...</div>
        </div>
        <div class="sec second"><i class="tri down big"></i><b>Erscheinungsbild</b></div>
        <div class="group g2">
          <div class="fontrow"><span class="fontbtn">Schriftart</span><span class="fontarrow"><i class="tri"></i></span></div>
          <div class="frow colorrow"><span class="flabel">Schriftfarbe</span><span class="colorbtn"><i></i></span><span class="colorarrow"><i class="tri"></i></span></div>
          <div class="frow inrow"><span class="flabel">Horizontaler Rand</span><span class="spin"><span class="spinval">0,00 mm</span><span class="spinbtn"><i class="tri up"></i><i class="tri"></i></span></span></div>
          <div class="frow inrow"><span class="flabel">Vertikaler Rand</span><span class="spin"><span class="spinval">0,00 mm</span><span class="spinbtn"><i class="tri up"></i><i class="tri"></i></span></span></div>
          <div class="glabel">Horizontale Ausrichtung</div>
          <div class="radios r-h"><span class="radio w64"><i></i>Links</span><span class="radio w84"><i></i>Zentriert</span><span class="radio w73"><i></i>Rechts</span><span class="radio"><i class="dot"></i>Blocksatz</span></div>
          <div class="glabel">Vertikale Ausrichtung</div>
          <div class="radios r-v"><span class="radio w64"><i class="dot"></i>Oben</span><span class="radio w62"><i></i>Mitte</span><span class="radio"><i></i>Unten</span></div>
        </div>
        <div class="sec c1"><i class="tri right"></i><b>Position und Größe</b></div>
        <div class="sec c2"><i class="tri right"></i><b>Drehung</b></div>
        <div class="sec c3"><i class="tri right"></i><i class="box"></i><b>Rahmen</b></div>
        <div class="sec c3"><i class="tri right"></i><i class="box"></i><b>Hintergrund</b></div>
      </div>
      <div class="vscroll"><i class="tri up"></i><span class="vs-track"></span><i class="tri"></i></div>
    </div>
  </aside>
</div>

<footer class="statusbar">
  <span class="st-x">x :321.985 mm</span>
  <span class="st-y">y: 54.6182 mm</span>
  <span class="st-p">Seite: 1</span>
  <span class="zoomcombo"><span class="zoomval">147.9%</span><span class="zoomarrow"><i class="tri"></i></span></span>
  <span class="slider"><i class="fill"></i><i class="knob"></i></span>
</footer>
</div>
</body>
</html>
```

FILE: styles.css
```css
* { box-sizing: border-box; }
html, body { margin: 0; padding: 0; background: #fff; }
body { width: 2160px; height: 1272px; padding: 37px 56px 0; font: 12.5px Inter, "Liberation Sans", sans-serif; color: #222; overflow: hidden; }
.defs { position: absolute; width: 0; height: 0; }

.window { width: 2048px; height: 1161px; display: flex; flex-direction: column; background: #ececec; border-radius: 11px; box-shadow: 0 0 0 1px #c4c4c4, 0 18px 40px 2px rgba(0,0,0,.38), 0 0 14px rgba(0,0,0,.08); overflow: hidden; }

.titlebar { position: relative; height: 29px; flex: none; display: flex; align-items: center; padding-left: 8px; gap: 8px; background: #fbf5f2; border-bottom: 1px solid #c9c9c9; }
.light { width: 12px; height: 12px; border-radius: 50%; }
.red { background: #fc4d49; } .amber { background: #fdae24; } .green { background: #25c13d; }
.wintitle { position: absolute; left: 0; right: 0; text-align: center; font-size: 13.4px; color: #333; }

.toolbar { height: 38px; flex: none; display: flex; align-items: center; background: linear-gradient(#f6f6f6, #ececec); border-bottom: 1px solid #c3c3c3; }
.grip { width: 12px; height: 18px; margin-left: 0; background: radial-gradient(circle, #b5b5b5 .7px, transparent .9px) 4px 0 / 3px 3px; background-repeat: repeat-y; flex: none; }
.grip.wide { width: 17px; background-position: 6px 0; }
.grip.flat { width: 22px; height: 14px; background: radial-gradient(circle, #b5b5b5 .7px, transparent .9px) 0 4px / 3px 3px repeat-x; }
.sep { width: 7px; height: 20px; flex: none; background: linear-gradient(#d6d6d6, #d6d6d6) center / 1px 100% no-repeat; }
.tb { width: 33px; flex: none; display: flex; justify-content: center; align-items: center; }
.ic { width: 24px; height: 24px; display: block; overflow: visible; }
.dim { opacity: .32; filter: grayscale(1); }
.one { font: 700 7px Inter, sans-serif; text-anchor: middle; fill: #222; }
.north { font: 700 9px Inter, sans-serif; text-anchor: middle; fill: #fff; }

.tri { display: block; width: 0; height: 0; border-left: 4px solid transparent; border-right: 4px solid transparent; border-top: 5px solid #555; }
.tri.grey { border-top-color: #aaa; }
.tri.up { border-top: 0; border-bottom: 5px solid #555; }
.tri.big { border-left-width: 5.5px; border-right-width: 5.5px; border-top-width: 7px; border-top-color: #333; }
.tri.right { border-top: 5.5px solid transparent; border-bottom: 5.5px solid transparent; border-left: 8px solid #333; border-right: 0; }

.pagecombo { margin-left: 2px; width: 82px; height: 30px; flex: none; display: flex; background: #fff; border: 1px solid #bdbdbd; border-radius: 3px; color: #b2b2b2; }
.pageval { flex: 1; padding: 7px 0 0 4px; font-size: 12.5px; }
.pagearrow { width: 20px; display: flex; align-items: center; justify-content: center; background: #efefef; border-left: 1px solid #ccc; }
.dropmark { width: 12px; display: flex; justify-content: center; flex: none; }

.workspace { flex: 1; min-height: 0; display: flex; }
.sidetools { width: 40px; flex: none; display: flex; flex-direction: column; align-items: center; background: linear-gradient(90deg, #f3f3f3, #ededed); border-right: 1px solid #bdbdbd; }
.st { width: 32px; height: 32px; flex: none; display: flex; align-items: center; justify-content: center; }
.st.on { height: 30px; margin: 1px 0; background: #d9d9d9; border: 1px solid #bdbdbd; border-radius: 3px; }
.st .ic { width: 25px; height: 25px; }

.center { width: 1612px; flex: none; display: flex; flex-direction: column; position: relative; }
.hruler { height: 16px; flex: none; display: flex; position: relative; background: #f1f1f1; overflow: hidden; font-size: 9.5px; color: #555; }
.rcorner { width: 15px; flex: none; }
.hlead { width: 7px; flex: none; background: linear-gradient(90deg, transparent 2.8px, #666 2.8px 3.8px, transparent 3.8px) bottom / 100% 3px no-repeat; }
.ht { width: 41.9px; flex: none; padding-left: 2px; line-height: 11px; border-left: 1px solid #555; letter-spacing: .2px; background-image: linear-gradient(#666, #666), repeating-linear-gradient(90deg, #666 0 1px, transparent 1px 4.19px); background-size: 1px 6px, 100% 3px; background-position: 20px bottom, 3.2px bottom; background-repeat: no-repeat; }
.cursor-x { position: absolute; left: 1540px; top: 0; width: 1px; height: 16px; background: #e33; }
.centerrow { flex: 1; min-height: 0; display: flex; }
.vruler { width: 15px; flex: none; position: relative; display: flex; flex-direction: column; background: #f1f1f1; overflow: hidden; font-size: 9.5px; color: #555; }
.vlead { height: 22px; flex: none; background: repeating-linear-gradient(180deg, #666 0 1px, transparent 1px 4.19px) right top / 3px 100% no-repeat; }
.vt { height: 41.9px; flex: none; border-top: 1px solid #555; background-image: linear-gradient(#666, #666), repeating-linear-gradient(180deg, #666 0 1px, transparent 1px 4.19px); background-size: 6px 1px, 3px 100%; background-position: right 20px, right 3.2px; background-repeat: no-repeat; }
.vt b { display: block; font-weight: 400; writing-mode: vertical-rl; transform: rotate(180deg); height: fit-content; width: 10px; line-height: 10px; margin-top: 1px; }
.cursor-y { position: absolute; left: 0; top: 293px; width: 15px; height: 1px; background: #e33; }

.canvas { flex: 1; min-width: 0; background: #d6d6d6; overflow: hidden; padding: 64px 0 0 175px; }
.sheet { position: relative; width: 1246px; height: 881px; background: #fff; box-shadow: 7px 7px 0 #999; color: #111; font-family: "Liberation Sans", Arial, sans-serif; }
.map { position: absolute; inset: 0; width: 100%; height: 100%; }
.land { fill: #fbd9ae; stroke: #333; stroke-width: 1; }
.r8 path, .r11 path, .r14 path, .r20 path, .r28 path, .r34 path { fill: none; stroke-width: 2; }
.r8 path { stroke: #440154; stroke-dasharray: 2 4 1 7 3 5; }
.r11 path { stroke: #3b528b; stroke-dasharray: 2 3 1 5 3 6; }
.r14 path { stroke: #21918c; stroke-dasharray: 3 2 1 4 2 3; }
.r20 path { stroke: #5ec962; stroke-dasharray: 2 3 3 2 1 5; }
.r28 path { stroke: #b5de2b; stroke-dasharray: 2 3 1 4; }
.r34 path { stroke: #f0e520; stroke-width: 2.4; stroke-dasharray: 2 2 1 3; }
.tint { fill: #e8416f; }

.maptitle { position: absolute; right: 17px; top: 39px; margin: 0; text-align: right; font-size: 36px; line-height: 36.5px; font-weight: 700; color: #000; letter-spacing: -.2px; }
.mapsub { position: absolute; right: 17px; top: 121px; margin: 0; font-size: 14.2px; line-height: 16px; color: #7a7a7a; }

.legend { position: absolute; left: 1011px; top: 227px; font-size: 17px; color: #111; }
.lg-school { height: 28px; display: flex; align-items: center; }
.lg-sym { width: 22px; height: 22px; margin: 0 13px 0 3px; overflow: visible; }
.lg-head { margin: 10px 0 1px; height: 20px; line-height: 20px; }
.lg-row { height: 27.4px; display: flex; align-items: center; gap: 8px; }
.patch { width: 29px; height: 17px; border: 1px solid #333; box-shadow: 1px 1px 0 #aaa; }
.p1 { background: #440154; } .p2 { background: #3b528b; } .p3 { background: #21918c; } .p4 { background: #5ec962; } .p5 { background: #fde725; } .p6 { background: #fcd9ae; border-color: #777; }

.scalebar { position: absolute; left: 999px; top: 810px; font-size: 17.5px; color: #111; }
.sb-labels { display: flex; height: 20px; line-height: 20px; }
.sb-labels span { width: 53.5px; text-align: center; }
.sb-labels .sb-last { width: auto; padding-left: 17px; white-space: nowrap; }
.sb-bar { display: flex; margin: 8px 0 0 26px; height: 14px; }
.sb-bar i { width: 53.5px; background: #000; border: 1px solid #111; }
.sb-bar .w { background: #fff; border: 2px solid #111; border-left-color: #777; border-right-color: #777; }

.sources { position: absolute; left: 33px; top: 802px; width: 242px; height: 59px; border: 1px dashed #5a0a3c; outline: 1px solid rgba(58,134,192,.55); outline-offset: -1px; }
.sources p { margin: 0; padding: 1px 0 0 1px; font: 10.6px/14px Inter, sans-serif; color: #777; }
.h { position: absolute; width: 11px; height: 11px; background: #fff; border: 1px solid #3a86c0; }
.tl,.tm,.tr { top: -1px; } .ml,.mr { top: 24px; } .bl,.bm,.br { bottom: -1px; }
.tl,.ml,.bl { left: -1px; } .tm,.bm { left: 115px; } .tr,.mr,.br { right: -1px; }

.splitter { width: 6px; flex: none; background: #ececec; border-left: 1px solid #d0d0d0; }

.dock { width: 390px; flex: none; display: flex; flex-direction: column; min-height: 0; border-right: 1px solid #c4c4c4; }
.tabs { height: 29px; flex: none; padding-top: 2px; display: flex; align-items: flex-end; border-bottom: 1px solid #bdbdbd; }
.tab { height: 25px; display: flex; align-items: center; justify-content: center; background: #dadada; border: 1px solid #c0c0c0; border-bottom: 0; border-radius: 3px 3px 0 0; font-size: 12.5px; color: #333; margin-bottom: -1px; }
.tab.on { height: 27px; background: #ececec; width: 80px; margin-bottom: -1px; position: relative; }
.tab.t2 { width: 147px; }
.tabs.lower { height: 26px; padding-top: 0; }
.tab.t3 { width: 66px; } .tab.t4 { width: 159px; } .tab.t5 { width: 87px; }
.docktitle { height: 21px; flex: none; display: flex; justify-content: space-between; align-items: center; padding: 0 2px 0 4px; font-size: 11px; color: #333; }
.docktitle.second { height: 20px; }
.dockbtns { display: flex; gap: 2px; }
.dbtn { width: 11px; height: 11px; }
.treehead { height: 19px; flex: none; display: flex; align-items: center; background: linear-gradient(#f8f8f8, #e6e6e6); border: 1px solid #c0c0c0; border-width: 1px 0 1px 1px; font-size: 12.5px; color: #333; }
.th-a { width: 28px; display: flex; padding-left: 3px; border-right: 1px solid #ccc; height: 100%; align-items: center; }
.th-b { width: 28px; display: flex; padding-left: 4px; border-right: 1px solid #ccc; height: 100%; align-items: center; }
.th-c { padding-left: 3px; }
.eye { width: 15px; height: 11px; } .padlock { width: 12px; height: 14px; }
.tree { height: 252px; flex: none; background: #fff; border-left: 1px solid #c0c0c0; border-bottom: 1px solid #bdbdbd; padding-top: 1px; }
.row { height: 18px; display: flex; align-items: center; padding-left: 3px; font-size: 12.6px; color: #222; }
.row.sel { background: #d9d9d9; }
.row b { color: #111; letter-spacing: .1px; }
.cb { width: 14px; height: 14px; flex: none; background: #fff; border: 1px solid #bbb; border-radius: 1px; display: block; }
.cb svg { display: block; width: 12px; height: 12px; }
.lockbox { margin-left: 14px; }
.ri { width: 14px; height: 14px; flex: none; margin: 0 7px 0 15px; }
.dockgap { height: 8px; flex: none; }
.ptitle { height: 20px; flex: none; display: flex; align-items: center; padding-left: 5px; background: #c9c9c9; font-weight: 700; font-size: 12.5px; color: #111; }

.scrollwrap { flex: 1; min-height: 0; display: flex; overflow: hidden; border-left: 1px solid #c0c0c0; }
.props { width: 375px; flex: none; }
.sec { height: 24px; display: flex; align-items: center; font-size: 12.8px; color: #111; }
.sec b { margin-left: 10px; }
.sec.first { margin-top: 9px; padding-left: 13px; } .sec.second { margin-top: 4px; padding-left: 13px; }
.sec.c1 { margin-top: 5px; padding-left: 15px; } .sec.c2 { margin-top: 3px; padding-left: 15px; } .sec.c3 { padding-left: 15px; }
.sec .box { margin-left: 8px; } .sec.c3 b { margin-left: 8px; }
.group { margin: 0 0 0 11px; width: 352px; padding: 0 13px; border: 1px solid #dcdcdc; border-radius: 2px; background: #e8e8e8; }
.g1 { margin-top: 1px; height: 232px; padding-top: 9px; }
.g2 { height: 243px; padding-top: 11px; }
.textarea { height: 150px; padding: 6px 4px; background: #fff; border: 1px solid #bdbdbd; line-height: 16px; font-size: 12.9px; color: #333; }
.check { display: flex; align-items: center; gap: 5px; margin-top: 9px; height: 18px; color: #333; }
.box { display: block; width: 14px; height: 14px; flex: none; background: #fff; border: 1px solid #c4c4c4; border-radius: 1px; }
.button { margin-top: 9px; height: 22px; display: flex; align-items: center; justify-content: center; background: linear-gradient(#fbfbfb, #eee); border: 1px solid #bdbdbd; border-radius: 2px; color: #333; font-size: 12.7px; }
.fontrow { display: flex; height: 22px; }
.fontbtn { flex: 1; display: flex; align-items: center; padding-left: 6px; font-size: 8.5px; background: linear-gradient(#fbfbfb, #eee); border: 1px solid #bdbdbd; border-radius: 2px 0 0 2px; }
.fontarrow { width: 12px; display: flex; align-items: center; justify-content: center; background: #f6f6f6; border: 1px solid #bdbdbd; border-left: 0; }
.frow { display: flex; align-items: center; }
.flabel { width: 117px; flex: none; color: #222; }
.colorrow { height: 26px; margin-top: 7px; }
.colorbtn { width: 107px; height: 26px; padding: 4px; background: linear-gradient(#fbfbfb, #eee); border: 1px solid #bdbdbd; border-radius: 2px 0 0 2px; }
.colorbtn i { display: block; height: 100%; background: #737373; border-radius: 3px; }
.colorarrow { width: 12px; height: 26px; display: flex; align-items: center; justify-content: center; background: #f6f6f6; border: 1px solid #bdbdbd; border-left: 0; }
.inrow { height: 22px; margin-top: 9px; }
.spin { flex: 1; height: 22px; display: flex; background: #fff; border: 1px solid #bdbdbd; border-radius: 2px; }
.spinval { flex: 1; padding-left: 4px; line-height: 21px; font-size: 12.8px; color: #222; }
.spinbtn { width: 15px; display: flex; flex-direction: column; align-items: center; justify-content: center; gap: 3px; background: #efefef; border-left: 1px solid #ccc; }
.glabel { height: 18px; line-height: 18px; margin-top: 7px; color: #222; }
.radios { display: flex; height: 18px; margin-top: 6px; }
.r-v { margin-top: 7px; }
.radio { display: flex; align-items: center; gap: 6px; color: #333; }
.radio i { display: block; width: 14px; height: 14px; border-radius: 50%; background: #fff; border: 1px solid #bfbfbf; }
.radio i.dot { background: radial-gradient(circle, #333 0 3px, #fff 3.5px); }
.w64 { width: 64px; } .w84 { width: 84px; } .w73 { width: 73px; } .w62 { width: 62px; }
.vscroll { width: 13px; flex: none; display: flex; flex-direction: column; align-items: center; padding: 5px 0; background: #dfdfdf; border-left: 1px solid #d5d5d5; position: relative; }
.vs-track { flex: 1; width: 13px; margin: 4px 0; background: linear-gradient(#fff 0 370px, transparent 370px); }

.statusbar { position: relative; height: 30px; flex: none; display: flex; align-items: center; padding-left: 1431px; background: #f0f0f0; border-top: 1px solid #c4c4c4; font-size: 12.8px; color: #222; z-index: 1; }
.st-x { width: 106px; } .st-y { width: 107px; } .st-p { width: 106px; }
.zoomcombo { width: 167px; height: 22px; display: flex; background: #fff; border: 1px solid #bdbdbd; border-radius: 2px; }
.zoomval { flex: 1; padding-left: 3px; line-height: 20px; font-size: 12.8px; }
.zoomarrow { width: 20px; display: flex; align-items: center; justify-content: center; background: #efefef; border-left: 1px solid #ccc; }
.slider { position: relative; width: 98px; height: 6px; margin-left: 8px; background: #ddd; border: 1px solid #bdbdbd; border-radius: 2px; }
.fill { position: absolute; left: 0; top: 0; width: 16px; height: 100%; background: #4a90e2; }
.knob { position: absolute; left: 14px; top: -6px; width: 13px; height: 16px; background: #fafafa; border: 1px solid #b5b5b5; border-radius: 3px; }
```
